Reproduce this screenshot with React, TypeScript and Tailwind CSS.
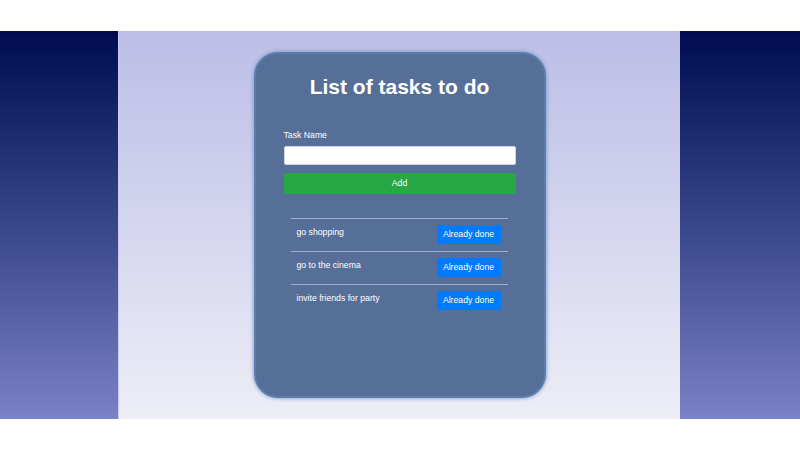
// Task list page: gradient side bands around a centered card
import React from 'react';

const tasks = ['go shopping', 'go to the cinema', 'invite friends for party'];

function TaskRow({ name }: { name: string }) {
  return (
    <li className="flex items-start justify-between border-t border-[#9fb0cc] pl-[6px] pr-[7px] pt-[6px] pb-[7px]">
      <span className="mt-[1px] text-[8.7px] leading-[12px] text-white">{name}</span>
      <button className="h-[19px] w-[64px] rounded-[2px] bg-[#007bff] text-[8.7px] text-white">
        Already done
      </button>
    </li>
  );
}

export default function App() {
  return (
    <div
      className="flex h-[450px] w-[800px] flex-col bg-white"
      style={{ fontFamily: '"Liberation Sans", Arial, sans-serif' }}
    >
      <div className="h-[31px] shrink-0 bg-white" />
      <div className="flex h-[388px] shrink-0">
        <div className="w-[118px] bg-gradient-to-b from-[#020a50] to-[#7b82c5]" />
        <div className="flex flex-1 justify-center border-l border-[#c9cbee] bg-gradient-to-b from-[#bcbde6] to-[#eeeef7] pt-[21px]">
          <div className="flex h-[346px] w-[292px] flex-col rounded-[24px] border-2 border-[#5a7dab] bg-[#566f99] px-[28px] shadow-[0_0_4px_#6a8fc0]">
            <h1 className="mt-[19px] text-center text-[21px] font-bold leading-[28px] text-white">
              List of tasks to do
            </h1>
            <label className="mt-[28px] text-[8.7px] leading-[12px] text-white">Task Name</label>
            <input className="mt-[5px] h-[19px] w-full rounded-[2px] border border-[#d0d6e0] bg-white" />
            <button className="mt-[8px] h-[21px] w-full rounded-[2px] bg-[#28a745] text-[8.7px] text-white">
              Add
            </button>
            <ul className="ml-[7px] mr-[8px] mt-[24px]">
              {tasks.map((t) => (
                <TaskRow key={t} name={t} />
              ))}
            </ul>
          </div>
        </div>
        <div className="w-[120px] bg-gradient-to-b from-[#020a50] to-[#7b82c5]" />
      </div>
      <div className="flex-1 bg-white" />
    </div>
  );
}
